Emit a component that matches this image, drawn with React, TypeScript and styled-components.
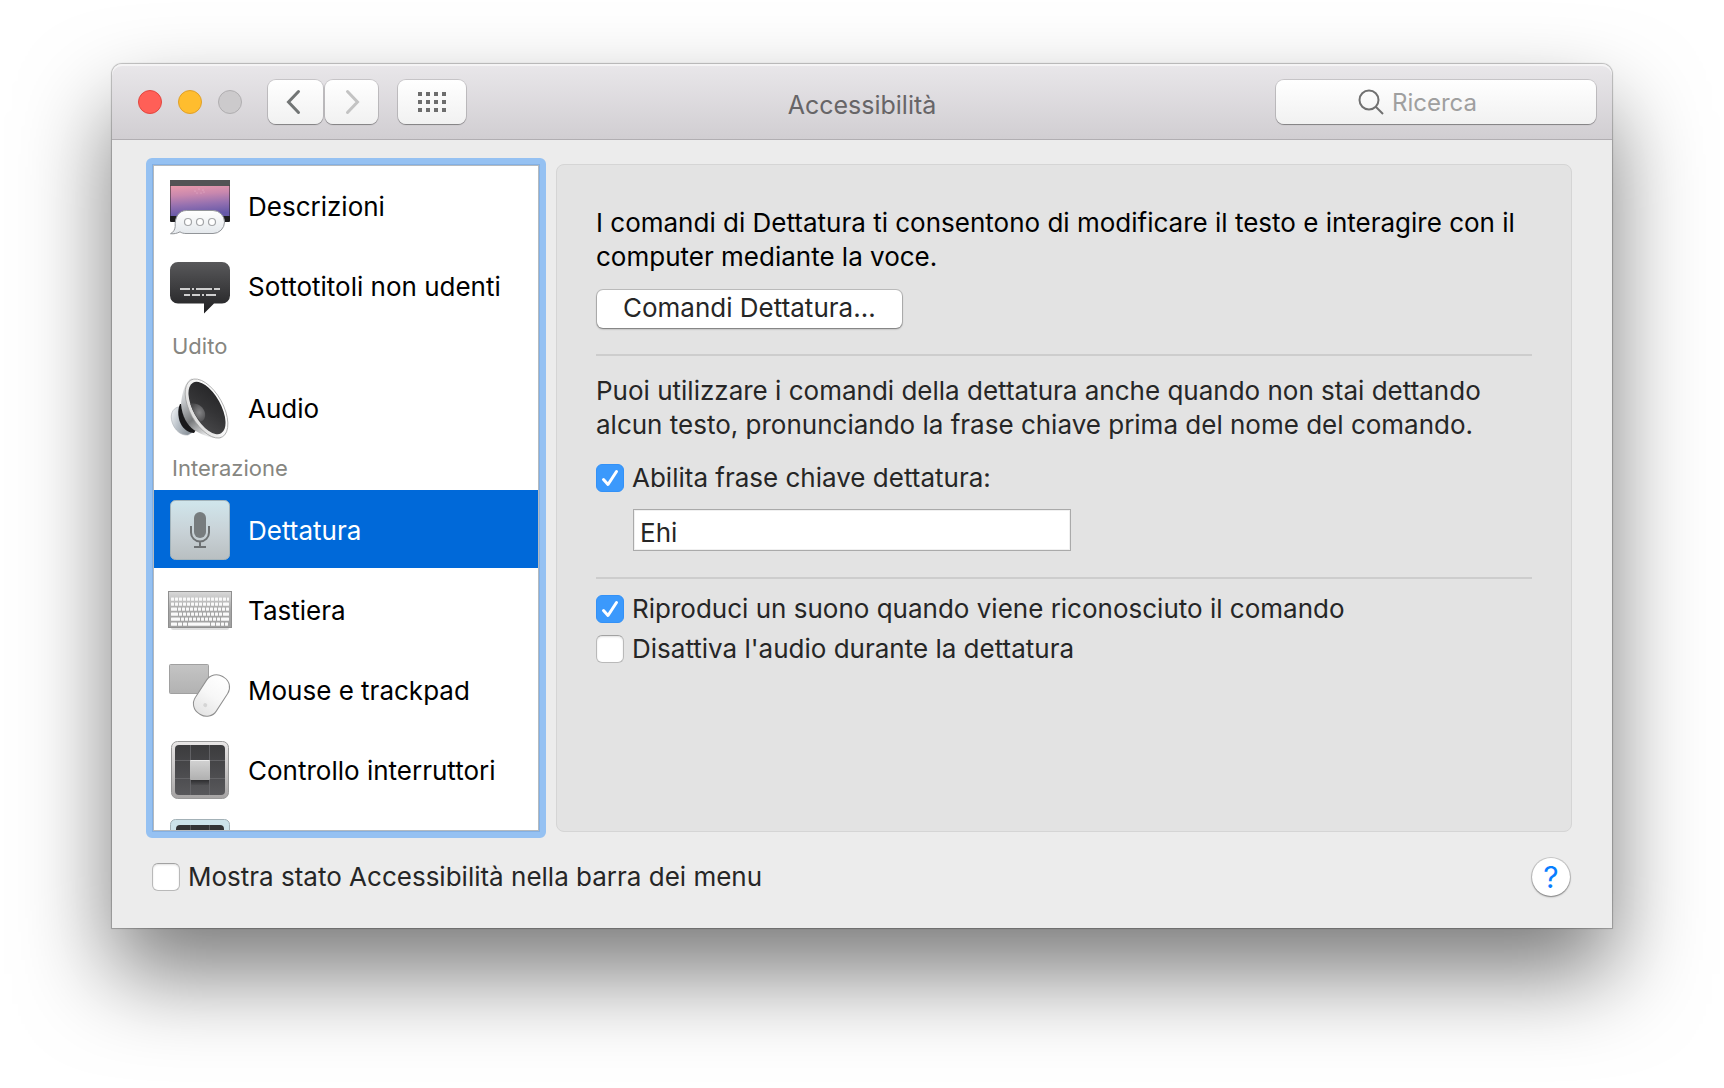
import React, { useId, useState } from 'react';
import styled, { createGlobalStyle, css } from 'styled-components';

const GlobalStyle = createGlobalStyle`
  *, *::before, *::after { box-sizing: border-box; }
  body {
    margin: 0;
    background: #fff;
    color: #262626;
    font-family: Inter, "Liberation Sans", sans-serif;
    font-size: 26px;
    line-height: 34px;
  }
  button, input { font: inherit; color: inherit; margin: 0; }
  p, h1, h2, ul { margin: 0; padding: 0; font: inherit; }
`;

const Page = styled.div`
  display: flex;
  height: 100vh;
  min-height: 860px;
  padding: 64px 112px 160px;
`;

const Window = styled.div`
  flex: 1;
  min-width: 0;
  display: flex;
  flex-direction: column;
  background: #ececec;
  border-radius: 10px 10px 0 0;
  box-shadow: 0 0 1px 1px rgba(0, 0, 0, 0.24), 0 46px 90px rgba(0, 0, 0, 0.52);
`;

const TitleBar = styled.header`
  display: grid;
  grid-template-columns: 1fr auto 1fr;
  align-items: center;
  height: 76px;
  padding: 0 16px;
  border-bottom: 1px solid #b1aeb2;
  border-radius: 10px 10px 0 0;
  background: linear-gradient(#e9e7ea, #d1ced2);
  box-shadow: inset 0 2px 0 #f5f4f5;
`;

const BarStart = styled.div`
  display: flex;
  align-items: center;
`;

const Lights = styled.div`
  display: flex;
  gap: 16px;
  margin: 0 26px 0 10px;
`;

const Light = styled.button<{ $fill: string; $edge: string }>`
  width: 24px;
  height: 24px;
  padding: 0;
  border: 1px solid ${(p) => p.$edge};
  border-radius: 50%;
  background: ${(p) => p.$fill};
`;

const raised = css`
  border: 0;
  background: linear-gradient(#fff, #f1f1f1);
  box-shadow: 0 0 0 1px rgba(0, 0, 0, 0.13), 0 1px 1px rgba(0, 0, 0, 0.3);
`;

const ToolButton = styled.button<{ $width: number }>`
  ${raised}
  display: grid;
  place-items: center;
  width: ${(p) => p.$width}px;
  height: 44px;
  padding: 0;
  border-radius: 8px;
`;

const NavPair = styled.div`
  display: flex;
  gap: 2px;
  margin-right: 20px;
`;

const Title = styled.h1`
  padding-top: 6px;
  color: #676567;
  font-size: 25px;
`;

const Search = styled.label`
  ${raised}
  justify-self: end;
  display: flex;
  align-items: center;
  justify-content: center;
  gap: 8px;
  width: 320px;
  height: 44px;
  border-radius: 8px;
`;

const SearchInput = styled.input`
  width: 122px;
  padding: 2px 0 0;
  border: 0;
  outline: 0;
  background: none;
  font-size: 24px;
  &::placeholder { color: #9f9f9f; opacity: 1; }
`;

const Body = styled.div`
  flex: 1;
  min-height: 0;
  display: grid;
  grid-template-columns: 400px minmax(0, 1fr);
  grid-template-rows: minmax(0, 1fr);
  gap: 10px;
  padding: 18px 40px 0 34px;
`;

const FocusRing = styled.nav`
  padding: 1px;
  border: 6px solid #95c1f2;
  border-radius: 6px;
  background: #83b0e4;
`;

const Scroller = styled.div`
  height: 100%;
  overflow: hidden;
  border: 1px solid #b4babf;
  background: #fff;
  color: #000;
`;

const List = styled.ul`
  list-style: none;
`;

const GroupTitle = styled.h2`
  height: 42px;
  padding: 3px 18px;
  color: #868681;
  font-size: 22px;
`;

const Item = styled.button<{ $selected: boolean }>`
  display: flex;
  align-items: center;
  gap: 16px;
  width: 100%;
  height: 78px;
  margin-bottom: 2px;
  padding: 2px 14px 0;
  border: 0;
  text-align: left;
  background: ${(p) => (p.$selected ? '#0069d9' : 'transparent')};
  color: ${(p) => (p.$selected ? '#fff' : '#000')};
  svg { flex: none; }
`;

const ItemLabel = styled.span`
  padding-top: 2px;
`;

const Panel = styled.main`
  margin: 6px 0;
  padding: 41px 39px;
  border: 1px solid #d5d5d5;
  border-radius: 8px;
  background: #e3e3e3;
`;

const Intro = styled.p`
  color: #000;
`;

const PushButton = styled.button`
  display: block;
  height: 38px;
  margin: 16px 1px 0;
  padding: 0 26px 2px;
  border: 0;
  border-radius: 6px;
  background: #fff;
  box-shadow: 0 0 0 1px rgba(0, 0, 0, 0.16), 0 1px 2px rgba(0, 0, 0, 0.4);
`;

const Divider = styled.hr`
  height: 2px;
  margin: 26px 0 18px;
  border: 0;
  background: #cdcdcd;
`;

const CheckRow = styled.div`
  display: flex;
  align-items: center;
  gap: 8px;
  height: 40px;
`;

const PhraseRow = styled(CheckRow)`
  margin-top: 16px;
`;

const BoxFrame = styled.span`
  display: grid;
  flex: none;
  width: 28px;
  height: 28px;
  > * { grid-area: 1 / 1; }
  svg { pointer-events: none; }
`;

const Box = styled.input`
  appearance: none;
  width: 28px;
  height: 28px;
  border: 1px solid #b9b9b9;
  border-top-color: #a2a2a2;
  border-radius: 6px;
  background: #fff;
  box-shadow: inset 0 1px 2px rgba(0, 0, 0, 0.12);
  &:checked {
    border-color: #3391f7;
    background: #3b99fc;
    box-shadow: none;
  }
`;

const PhraseInput = styled.input`
  display: block;
  width: 438px;
  height: 42px;
  margin: 11px 0 0 37px;
  padding: 4px 6px 0;
  border: 1px solid #aaa;
  border-radius: 0;
  outline: 0;
  background: #fff;
  box-shadow: inset 0 0 0 1px #f0f0f0;
`;

const CheckGroup = styled.div`
  margin-top: -8px;
`;

const Footer = styled.footer`
  display: flex;
  align-items: center;
  justify-content: space-between;
  height: 90px;
  padding: 0 42px 12px 40px;
`;

const HelpButton = styled.button`
  width: 38px;
  height: 38px;
  padding: 0;
  border: 0;
  border-radius: 50%;
  background: #fff;
  color: #087eff;
  font-size: 30px;
  box-shadow: 0 0 0 1px rgba(0, 0, 0, 0.14), 0 1px 2px rgba(0, 0, 0, 0.4);
`;

function CheckField({ label, initial = false }: { label: string; initial?: boolean }) {
  const id = useId();
  const [on, setOn] = useState(initial);
  return (
    <>
      <BoxFrame>
        <Box id={id} type="checkbox" checked={on} onChange={(e) => setOn(e.target.checked)} />
        {on && (
          <svg width="28" height="28" viewBox="0 0 28 28" fill="none" stroke="#fff" strokeWidth="3" strokeLinecap="round" strokeLinejoin="round" aria-hidden="true">
            <path d="M7.5 15.5 12 20.5 20.5 7.5" />
          </svg>
        )}
      </BoxFrame>
      <label htmlFor={id}>{label}</label>
    </>
  );
}

const Icon = ({ children }: { children: React.ReactNode }) => (
  <svg width="64" height="64" viewBox="0 0 64 64" aria-hidden="true">{children}</svg>
);

const Gradient = ({ id, stops, x2 = 0, y2 = 1 }: { id: string; stops: string[]; x2?: number; y2?: number }) => (
  <linearGradient id={id} x1="0" y1="0" x2={x2} y2={y2}>
    {stops.map((color, i) => (
      <stop key={i} offset={i / (stops.length - 1)} stopColor={color} />
    ))}
  </linearGradient>
);

const DescriptionsIcon = () => (
  <Icon>
    <defs>
      <Gradient id="sky" stops={['#e99bac', '#c988ae', '#9470b0', '#6659a8']} x2={0.15} />
      <Gradient id="bubble" stops={['#ffffff', '#e4e8ec']} />
    </defs>
    <rect x="2" y="6" width="60" height="42" rx="1" fill="#1c1c1e" />
    <rect x="2" y="6" width="60" height="6" rx="1" fill="#535355" />
    <rect x="2.5" y="12" width="59" height="30" fill="url(#sky)" />
    <g fill="#f6c9dc" opacity="0.7">
      <circle cx="27" cy="17" r="0.6" /><circle cx="31" cy="15" r="0.6" /><circle cx="35" cy="16" r="0.6" />
      <circle cx="29" cy="19" r="0.6" /><circle cx="33" cy="19" r="0.6" /><circle cx="36" cy="18" r="0.6" />
    </g>
    <path d="M18.5 36.5H45a11.500 11.500 0 0 1 0 23H18c-2.500 0-4.500-.6-6-1.700-3 1.700-6 2.200-9.500 1.900 3-1.500 4.300-4 4.700-7C6.500 43 11 36.500 18.500 36.500Z" fill="url(#bubble)" stroke="#929599" />
    <g fill="#fff" stroke="#a3a5a8" strokeWidth="1.2">
      <circle cx="20" cy="48" r="3.500" /><circle cx="32" cy="48" r="3.500" /><circle cx="44" cy="48" r="3.500" />
    </g>
  </Icon>
);

const CaptionsIcon = () => (
  <Icon>
    <defs><Gradient id="caption" stops={['#58585a', '#3d3d3f', '#202022']} /></defs>
    <path d="M10 8H54a8 8 0 0 1 8 8V41.500a8 8 0 0 1-8 8H46L36 59.500V49.500H10a8 8 0 0 1-8-8V16a8 8 0 0 1 8-8Z" fill="url(#caption)" />
    <path d="M12 35h10m2 0h2m2 0h16m2 0h6M16 41h6m2 0h8m2 0h2m2 0h10" stroke="#cfcfcf" strokeWidth="2" />
  </Icon>
);

const AudioIcon = () => (
  <Icon>
    <defs>
      <Gradient id="magnet" stops={['#f6f8fa', '#b9c0c7', '#8d959d']} x2={1} y2={0.5} />
      <Gradient id="horn" stops={['#ffffff', '#c4c7ca', '#77797b', '#e6e7e8']} x2={0.5} />
      <Gradient id="rim" stops={['#ffffff', '#f4f4f4', '#dcdcdc']} />
      <Gradient id="membrane" stops={['#222224', '#343436', '#4c4c4e']} x2={1} />
      <radialGradient id="dome" cx="0.6" cy="0.5" r="0.6"><stop offset="0" stopColor="#858587" /><stop offset="1" stopColor="#4b4b4d" /></radialGradient>
    </defs>
    <path d="M10 31C4 33 2 39 4 46c2.500 8 9 14 16 13l5-3-9-24Z" fill="url(#magnet)" stroke="#a9afb5" strokeWidth="0.6" />
    <path d="M12 28C9 34 10 44 14 50c3 4 7 7 12 7l2-3L16 28Z" fill="#19191b" />
    <path d="M24 2C17 5 14 17 13 28c1 12 6 21 13 26 8 5 18 8.500 27 8.500L40 20Z" fill="url(#horn)" />
    <ellipse cx="38.500" cy="32.500" rx="32.500" ry="16.500" transform="rotate(61 38.500 32.500)" fill="url(#rim)" stroke="#9b9b9b" strokeWidth="0.7" />
    <ellipse cx="39" cy="32" rx="29" ry="13.800" transform="rotate(61 39 32)" fill="url(#membrane)" />
    <path d="M22.500 28c6-2 13 2.500 14.500 9 .8 5-1.500 8-4.500 8.500-4.500-4.500-8-11-10-17.500Z" fill="url(#dome)" />
  </Icon>
);

const MicIcon = () => (
  <Icon>
    <defs><Gradient id="tile" stops={['#d0e6ec', '#c9d3d8', '#b9bfc1']} /></defs>
    <rect x="2.500" y="2.500" width="59" height="59" rx="5" fill="url(#tile)" stroke="#a3b4bb" />
    <rect x="26" y="14" width="12" height="26" rx="6" fill="#777c7e" />
    <path d="M23 28v6.500a9 9 0 0 0 18 0V28M32 43.500V49M26 49h12" fill="none" stroke="#6d7173" strokeWidth="2" />
  </Icon>
);

const keyRows = [
  { y: 19.5, keys: Array(15).fill(3) },
  { y: 24.5, keys: [3, 3, 3, 3, 3, 3, 3, 3, 3, 3, 3, 3, 3, 6] },
  { y: 29.5, keys: [6, 3, 3, 3, 3, 3, 3, 3, 3, 3, 3, 3, 3, 3] },
  { y: 34.5, keys: [7, 3, 3, 3, 3, 3, 3, 3, 3, 3, 3, 3, 6] },
  { y: 39.5, keys: [9, 3, 3, 3, 3, 3, 3, 3, 3, 3, 3, 8] },
  { y: 44.5, keys: [6, 4, 4, 22, 4, 4, 3, 3] },
];

const KeyboardIcon = () => (
  <Icon>
    <defs><Gradient id="deck" stops={['#d9d9d9', '#a9a9a9', '#a0a0a0']} /></defs>
    <rect x="3" y="48" width="58" height="4" rx="2" fill="#dedede" />
    <rect x="0.500" y="13.500" width="63" height="36" fill="url(#deck)" stroke="#8f8f8f" />
    {keyRows.map((row) => {
      let x = 3;
      return row.keys.map((w: number, i: number) => {
        const at = x;
        x += w + 1;
        return <rect key={`${row.y}-${i}`} x={at} y={row.y} width={Math.min(w, 61 - at)} height="3.200" rx="0.500" fill="#f9f9f9" />;
      });
    })}
  </Icon>
);

const PointerIcon = () => (
  <Icon>
    <defs>
      <Gradient id="pad" stops={['#c4c4c4', '#b2b2b2']} />
      <Gradient id="mouse" stops={['#ffffff', '#f7f7f7', '#e4e4e4']} />
    </defs>
    <rect x="1.500" y="6.500" width="39" height="29" rx="1" fill="url(#pad)" stroke="#a0a0a0" />
    <g transform="rotate(33 43.500 37.500)">
      <rect x="31" y="15.500" width="25" height="44" rx="11.500" fill="url(#mouse)" stroke="#8f8f8f" />
      <circle cx="43.500" cy="49" r="2" fill="#d5d5d5" />
    </g>
  </Icon>
);

const SwitchIcon = () => (
  <Icon>
    <defs>
      <Gradient id="frame" stops={['#e9e7e7', '#c9c7c7', '#a5a3a3']} />
      <Gradient id="board" stops={['#3b3b3d', '#58585b']} />
      <Gradient id="cap" stops={['#d2d2d2', '#b0b0b0']} />
      <Gradient id="capShade" stops={['#151516', '#4d4d50']} />
    </defs>
    <rect x="3.500" y="3.500" width="57" height="57" rx="6" fill="url(#frame)" stroke="#999" />
    <rect x="7" y="7" width="50" height="50" rx="4" fill="url(#board)" />
    <path d="M22.500 7v50M41.500 7v50M7 22.500h50M7 40.500h50" stroke="#6a6a6d" strokeWidth="0.800" />
    <rect x="23" y="38" width="18" height="9" rx="1" fill="url(#capShade)" />
    <rect x="22" y="22" width="20" height="20" rx="1" fill="url(#cap)" />
    <path d="M22.500 22.500h19" stroke="#ececec" />
  </Icon>
);

const PadIcon = () => (
  <Icon>
    <rect x="2.500" y="1.500" width="59" height="60" rx="5" fill="#cde3ea" stroke="#a3b1b7" />
    <rect x="8" y="7" width="48" height="48" rx="4" fill="#333335" />
    <path d="M22.500 7v48M41.500 7v48" stroke="#626265" strokeWidth="0.800" />
  </Icon>
);

type Entry = { label: string; icon: React.ReactNode };
const groups: { title?: string; entries: Entry[] }[] = [
  { entries: [{ label: 'Descrizioni', icon: <DescriptionsIcon /> }, { label: 'Sottotitoli non udenti', icon: <CaptionsIcon /> }] },
  { title: 'Udito', entries: [{ label: 'Audio', icon: <AudioIcon /> }] },
  {
    title: 'Interazione',
    entries: [
      { label: 'Dettatura', icon: <MicIcon /> },
      { label: 'Tastiera', icon: <KeyboardIcon /> },
      { label: 'Mouse e trackpad', icon: <PointerIcon /> },
      { label: 'Controllo interruttori', icon: <SwitchIcon /> },
      { label: '', icon: <PadIcon /> },
    ],
  },
];

export default function App() {
  const [selected, setSelected] = useState('Dettatura');
  return (
    <>
      <GlobalStyle />
      <Page>
        <Window>
          <TitleBar>
            <BarStart>
              <Lights>
                <Light type="button" $fill="#ff5f57" $edge="#e2463f" />
                <Light type="button" $fill="#ffbd2e" $edge="#e0a028" />
                <Light type="button" $fill="#cccacc" $edge="#b0aeb0" />
              </Lights>
              <NavPair>
                <ToolButton type="button" $width={55}>
                  <svg width="20" height="26" viewBox="0 0 20 26" fill="none" stroke="#727575" strokeWidth="3" strokeLinecap="round" aria-hidden="true"><path d="M12.500 2.500 2.500 13l10 10.500" /></svg>
                </ToolButton>
                <ToolButton type="button" $width={53}>
                  <svg width="16" height="26" viewBox="0 0 16 26" fill="none" stroke="#c3c3c3" strokeWidth="3" strokeLinecap="round" aria-hidden="true"><path d="m3.500 2.500 10 10.500-10 10.500" /></svg>
                </ToolButton>
              </NavPair>
              <ToolButton type="button" $width={68}>
                <svg width="28" height="20" viewBox="0 0 28 20" fill="#6d6d6d" aria-hidden="true">
                  {[0, 8, 16].map((y) => [0, 8, 16, 24].map((x) => <rect key={`${x}-${y}`} x={x} y={y} width="4" height="4" />))}
                </svg>
              </ToolButton>
            </BarStart>
            <Title>Accessibilità</Title>
            <Search>
              <svg width="26" height="26" viewBox="0 0 26 26" fill="none" stroke="#707070" strokeWidth="2" aria-hidden="true">
                <circle cx="11" cy="11" r="9.500" /><path d="m17.500 17.500 7.500 7.500" />
              </svg>
              <SearchInput type="text" placeholder="Ricerca" />
            </Search>
          </TitleBar>
          <Body>
            <FocusRing>
              <Scroller>
                {groups.map((group, g) => (
                  <React.Fragment key={g}>
                    {group.title && <GroupTitle>{group.title}</GroupTitle>}
                    <List>
                      {group.entries.map((entry) => (
                        <li key={entry.label}>
                          <Item type="button" $selected={entry.label === selected} onClick={() => setSelected(entry.label)}>
                            {entry.icon}
                            <ItemLabel>{entry.label}</ItemLabel>
                          </Item>
                        </li>
                      ))}
                    </List>
                  </React.Fragment>
                ))}
              </Scroller>
            </FocusRing>
            <Panel>
              <Intro>
                I comandi di Dettatura ti consentono di modificare il testo e interagire con il computer mediante la voce.
              </Intro>
              <PushButton type="button">Comandi Dettatura…</PushButton>
              <Divider />
              <p>
                Puoi utilizzare i comandi della dettatura anche quando non stai dettando alcun testo, pronunciando la frase chiave prima del nome del comando.
              </p>
              <PhraseRow><CheckField label="Abilita frase chiave dettatura:" initial /></PhraseRow>
              <PhraseInput type="text" aria-label="Frase chiave" defaultValue="Ehi" />
              <Divider />
              <CheckGroup>
                <CheckRow><CheckField label="Riproduci un suono quando viene riconosciuto il comando" initial /></CheckRow>
                <CheckRow><CheckField label="Disattiva l'audio durante la dettatura" /></CheckRow>
              </CheckGroup>
            </Panel>
          </Body>
          <Footer>
            <CheckRow><CheckField label="Mostra stato Accessibilità nella barra dei menu" /></CheckRow>
            <HelpButton type="button">?</HelpButton>
          </Footer>
        </Window>
      </Page>
    </>
  );
}
